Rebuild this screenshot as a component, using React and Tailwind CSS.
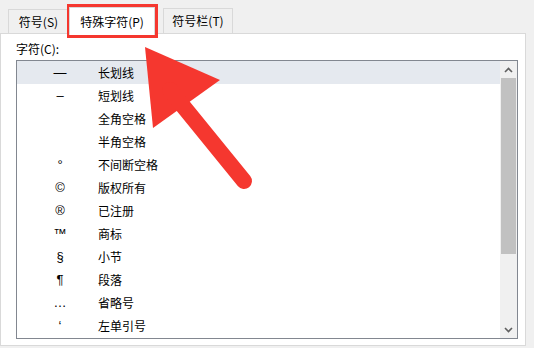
import React from 'react'

const rows = [
  ['—', '长划线'],
  ['–', '短划线'],
  ['', '全角空格'],
  ['', '半角空格'],
  ['°', '不间断空格'],
  ['©', '版权所有'],
  ['®', '已注册'],
  ['™', '商标'],
  ['§', '小节'],
  ['¶', '段落'],
  ['…', '省略号'],
  ['‘', '左单引号'],
]

function App() {
  return (
    <div
      className="relative w-[534px] h-[348px] overflow-hidden bg-[#f0f0f0] text-[12px] text-black"
      style={{ fontFamily: '"Microsoft YaHei", "Noto Sans CJK SC", "Noto Sans", sans-serif' }}
    >
      {/* tab strip */}
      <div className="flex items-end h-[34px] pl-[8px]">
        <div className="h-[24px] w-[61px] border border-b-0 border-[#d9d9d9] bg-[#f0f0f0] flex items-center justify-center leading-none mb-[1px]">
          符号(S)
        </div>
        <div className="relative z-10 h-[28px] w-[86px] -mb-[1px] border border-b-0 border-[#d9d9d9] bg-white flex items-center justify-center leading-none">
          特殊字符(P)
        </div>
        <div className="h-[25px] w-[70px] ml-[8px] border border-b-0 border-[#d9d9d9] bg-[#f0f0f0] flex items-center justify-center leading-none mb-[1px]">
          符号栏(T)
        </div>
      </div>

      {/* panel */}
      <div className="w-[526px] h-[313px] -mt-[1px] border border-[#d9d9d9] bg-white pl-[15px] pt-[7px]">
        <div className="h-[19px] leading-[16px]">字符(C):</div>
        <div className="flex w-[502px] h-[279px] border border-[#828790] bg-white">
          <div className="flex-1 flex flex-col">
            {rows.map(([sym, name], i) => (
              <div
                key={name}
                className={`flex items-center h-[23px] shrink-0 leading-none ${i === 0 ? 'bg-[#e5e9ef]' : ''}`}
              >
                <span className="w-[70px] ml-[8px] text-center text-[13px] font-['Liberation_Sans',sans-serif]">{sym}</span>
                <span className="ml-[3px]">{name}</span>
              </div>
            ))}
          </div>
          {/* scrollbar */}
          <div className="w-[17px] flex flex-col bg-[#f0f0f0]">
            <div className="h-[17px] flex items-center justify-center">
              <svg width="9" height="6" viewBox="0 0 9 6">
                <path d="M1 5 L4.5 1.5 L8 5" fill="none" stroke="#606060" strokeWidth="1.6" />
              </svg>
            </div>
            <div className="mx-[1px] h-[176px] bg-[#c1c1c1]" />
            <div className="flex-1" />
            <div className="h-[17px] flex items-center justify-center">
              <svg width="9" height="6" viewBox="0 0 9 6">
                <path d="M1 1 L4.5 4.5 L8 1" fill="none" stroke="#606060" strokeWidth="1.6" />
              </svg>
            </div>
          </div>
        </div>
      </div>

      {/* red highlight box */}
      <div className="absolute left-[67px] top-[4px] w-[91px] h-[34px] border-4 border-[#f5372f]" />

      {/* red arrow */}
      <svg className="absolute left-0 top-0 pointer-events-none" width="534" height="348" viewBox="0 0 534 348">
        <polygon points="145,47 153,128 220,80" fill="#f5372f" />
        <line x1="170" y1="90" x2="244" y2="181" stroke="#f5372f" strokeWidth="16" strokeLinecap="round" />
      </svg>
    </div>
  )
}

export default App
